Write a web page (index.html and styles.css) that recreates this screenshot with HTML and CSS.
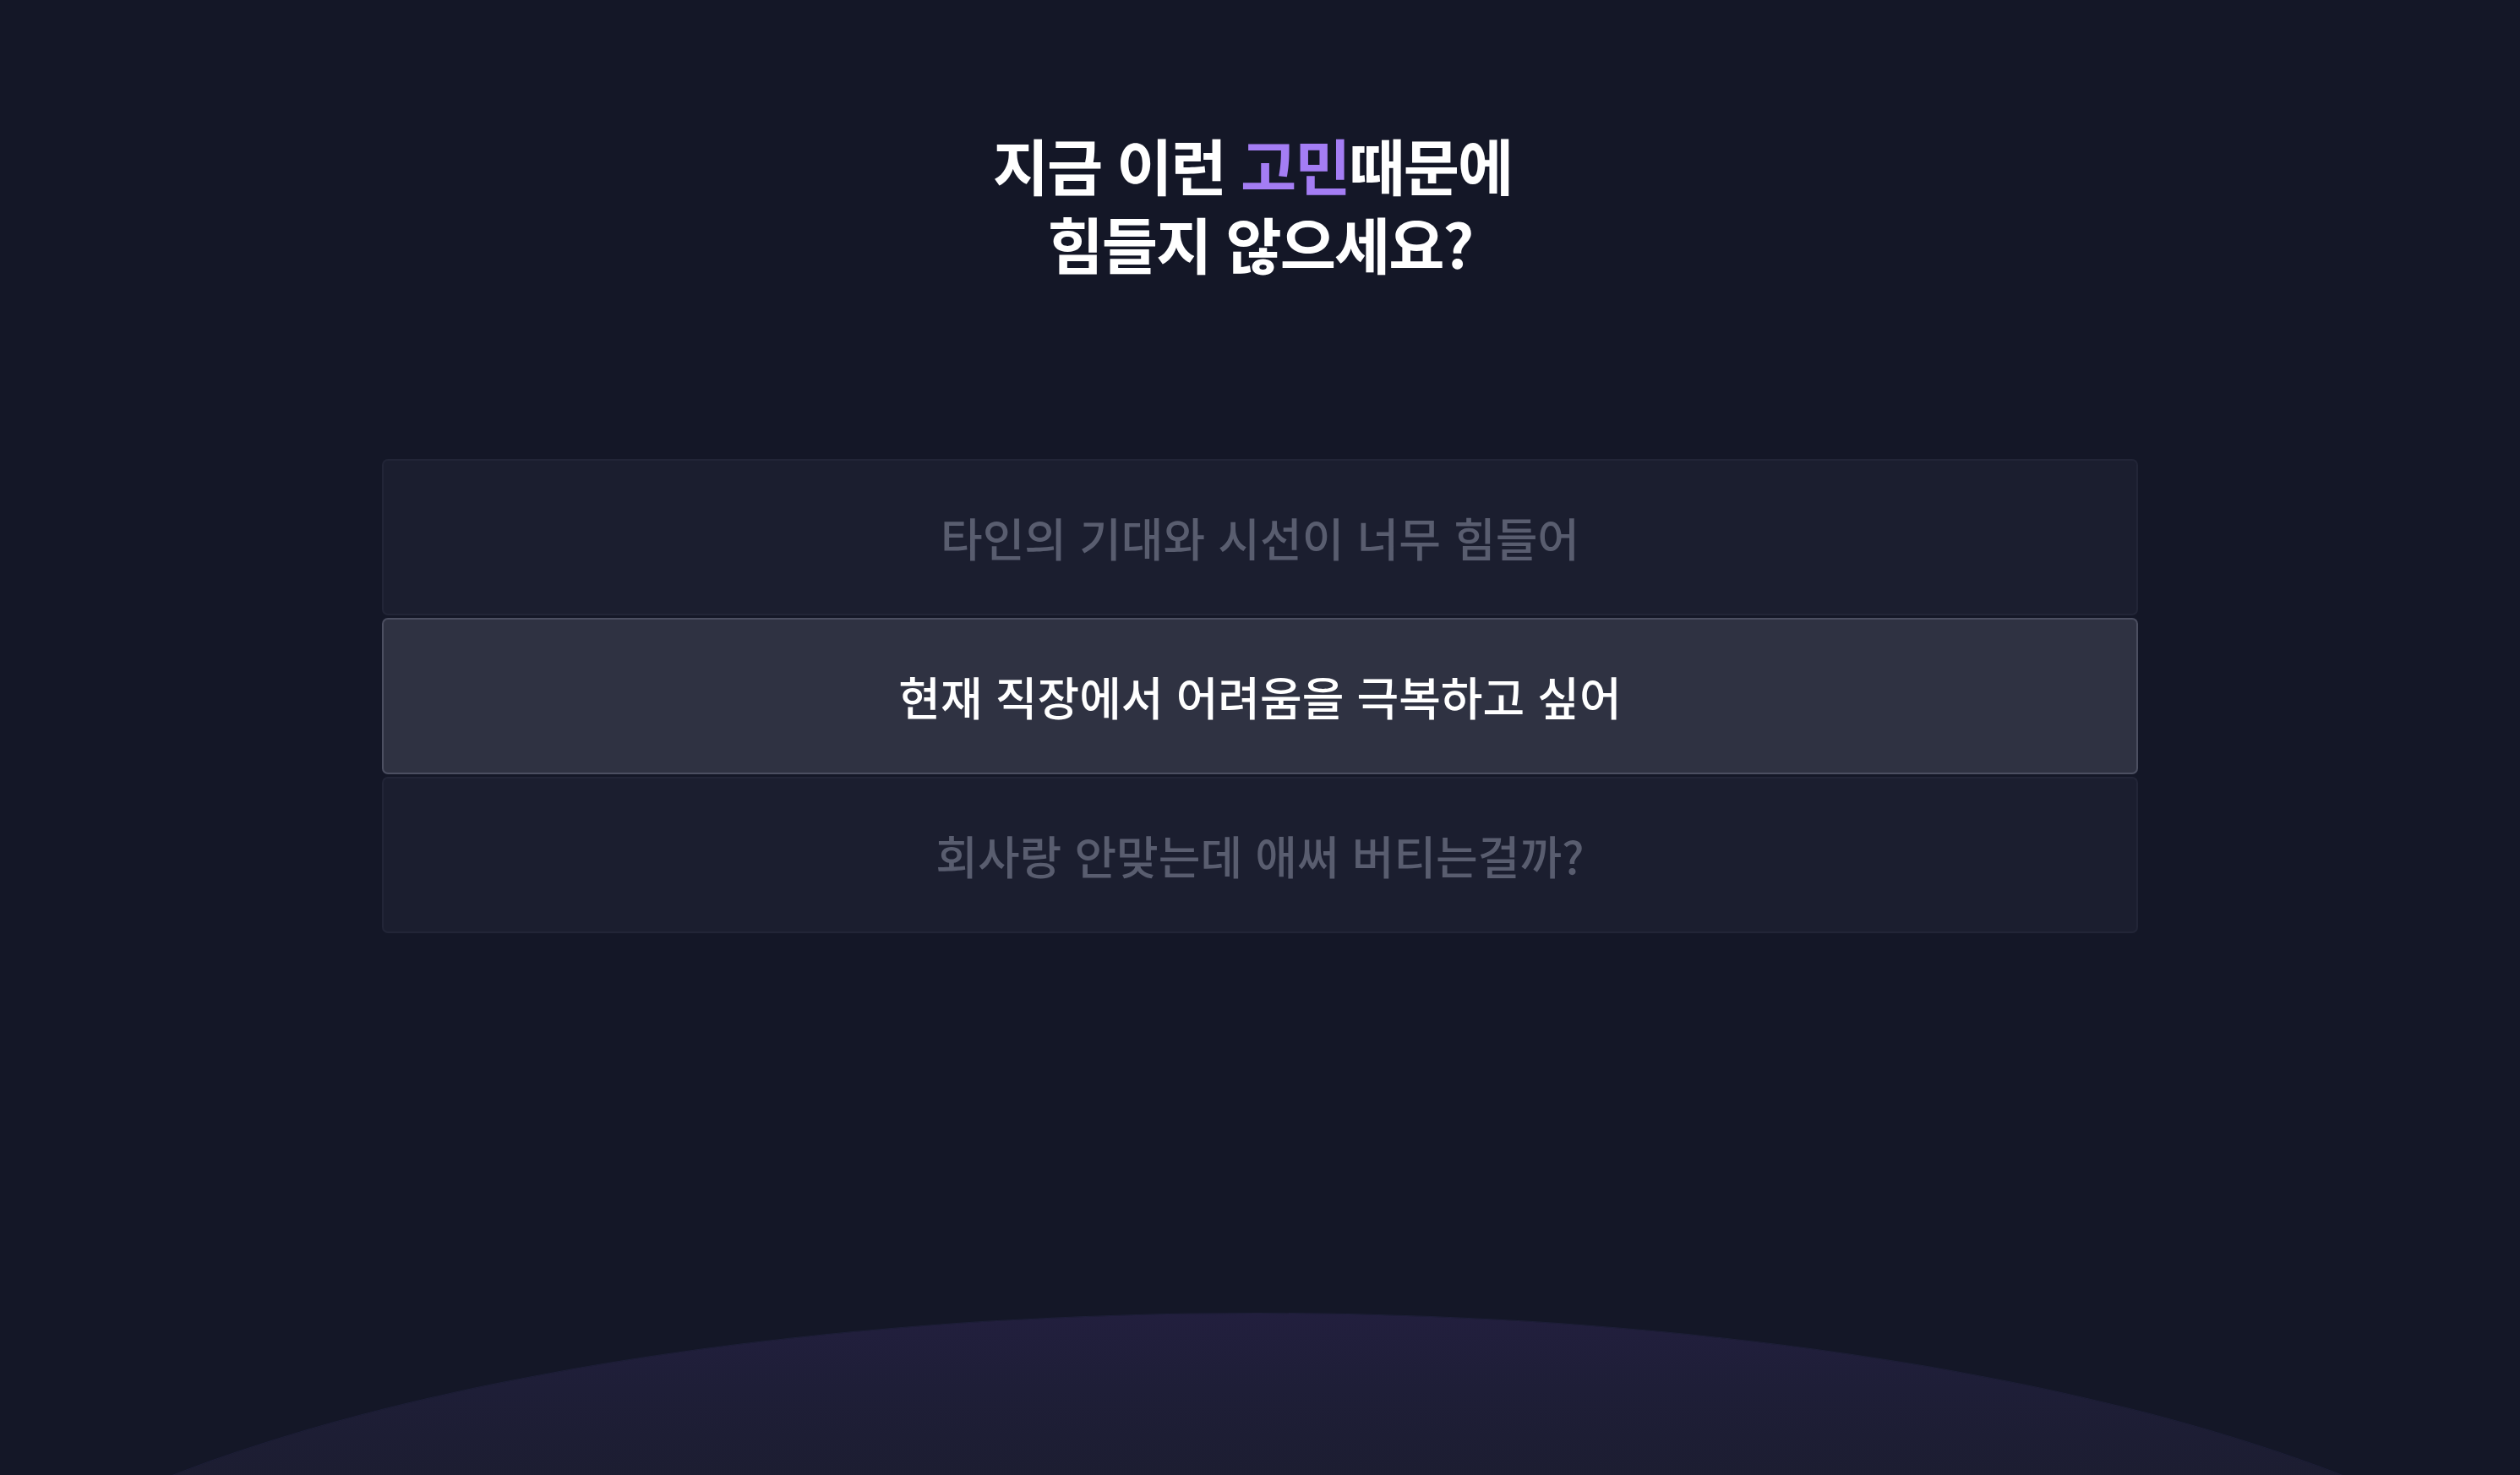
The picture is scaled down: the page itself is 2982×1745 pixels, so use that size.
FILE: index.html
```html
<!DOCTYPE html>
<html lang="ko">
<head>
<meta charset="utf-8">
<title>고민 선택</title>
<link rel="stylesheet" href="styles.css">
</head>
<body>
<main class="page">
  <section class="intro">
    <h1 class="title">지금 이런 <span class="accent">고민</span>때문에&nbsp;<br>힘들지 않으세요?</h1>
    <ul class="options">
      <li class="option">타인의 기대와 시선이 너무 힘들어</li>
      <li class="option option--active">현재 직장에서 어려움을 극복하고 싶어</li>
      <li class="option">회사랑 안맞는데 애써 버티는걸까?</li>
    </ul>
  </section>
  <div class="horizon"></div>
</main>
</body>
</html>
```

FILE: styles.css
```css
* {
  box-sizing: border-box;
}

html,
body {
  margin: 0;
  padding: 0;
  background: #141727;
}

body {
  font-family: "Noto Sans CJK KR", "Noto Sans", sans-serif;
  color: #ffffff;
}

.page {
  position: relative;
  min-height: 100vh;
  overflow: hidden;
}

.intro {
  position: relative;
  z-index: 1;
  display: flex;
  flex-direction: column;
  align-items: center;
  padding-top: 147px;
}

.title {
  margin: 0;
  font-size: 72px;
  font-weight: 700;
  line-height: 93px;
  letter-spacing: -2px;
  text-align: center;
  color: #ffffff;
}

.accent {
  color: #a47df4;
}

.options {
  list-style: none;
  margin: 210px 0 0;
  padding: 0;
  width: 2078px;
  display: flex;
  flex-direction: column;
  gap: 3px;
}

.option {
  height: 185px;
  display: flex;
  align-items: center;
  justify-content: center;
  background: #1b1e2f;
  border: 2px solid #222537;
  border-radius: 7px;
  font-size: 54px;
  font-weight: 500;
  letter-spacing: 0;
  color: #595d6f;
}

.option--active {
  background: #2f3242;
  border-color: #4c4f61;
  color: #ffffff;
}

/* soft planet-like curve rising from the bottom edge */
.horizon {
  position: absolute;
  left: 50%;
  top: 1554px;
  width: 3260px;
  height: 1000px;
  margin-left: -1633px;
  border-radius: 50%;
  background: linear-gradient(180deg, #221f3e 0px, #1e1e37 90px, #1c1d31 200px);
  box-shadow: 0 -1px 0 rgba(60, 54, 110, 0.25);
}
```
